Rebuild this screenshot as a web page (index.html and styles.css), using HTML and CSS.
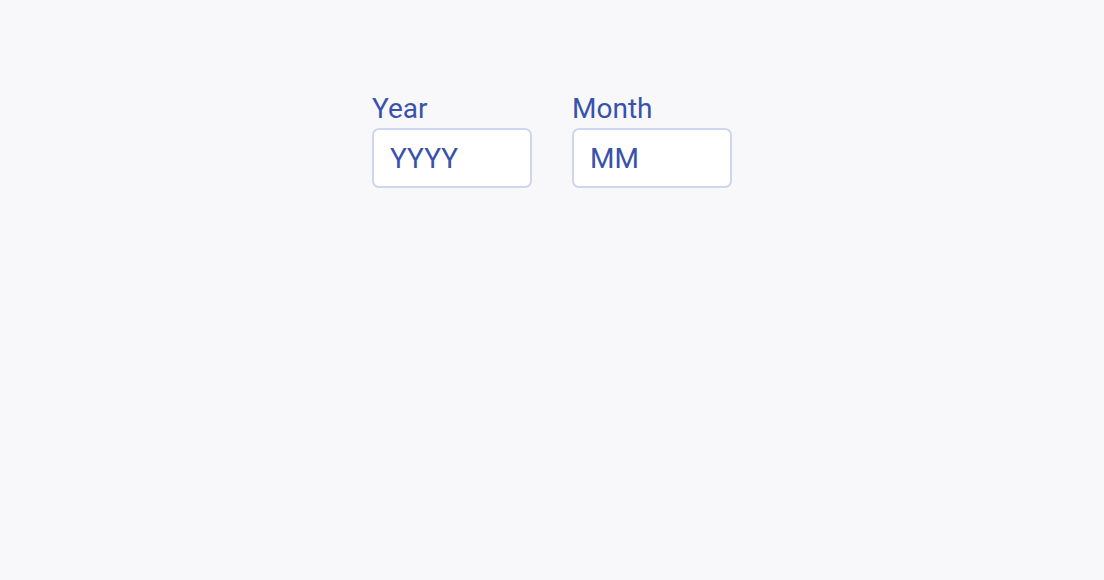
FILE: index.html
```html
<!DOCTYPE html>
<html lang="en">
<head>
    <meta charset="UTF-8">
    <meta name="viewport" content="width=device-width, initial-scale=1.0">
    <title>Date Fields</title>
    <link rel="stylesheet" href="styles.css">
</head>
<body>
    <div class="date-form">
        <div class="field">
            <label for="year">Year</label>
            <input type="text" id="year" class="date-input" placeholder="YYYY" maxlength="4">
        </div>
        <div class="field">
            <label for="month">Month</label>
            <input type="text" id="month" class="date-input" placeholder="MM" maxlength="2">
        </div>
    </div>
</body>
</html>
```

FILE: styles.css
```css
body {
    margin: 0;
    padding: 0;
    height: 100vh;
    background: #f8f8fb;
    font-family: Roboto, 'Liberation Sans', sans-serif;
}

.date-form {
    display: flex;
    justify-content: center;
    gap: 40px;
    padding-top: 93px;
}

.field {
    display: flex;
    flex-direction: column;
    gap: 3px;
}

.field label {
    font-size: 28px;
    line-height: 32px;
    color: #3852ab;
}

.date-input {
    box-sizing: border-box;
    width: 160px;
    height: 60px;
    padding: 0 16px;
    margin: 0;
    font-family: inherit;
    font-size: 28px;
    color: #3852ab;
    background: #ffffff;
    border: 2px solid #cfd7ee;
    border-radius: 7px;
    outline: none;
}

.date-input::placeholder {
    color: #3852ab;
    opacity: 1;
}

.date-input:focus {
    border-color: #3852ab;
}
```
